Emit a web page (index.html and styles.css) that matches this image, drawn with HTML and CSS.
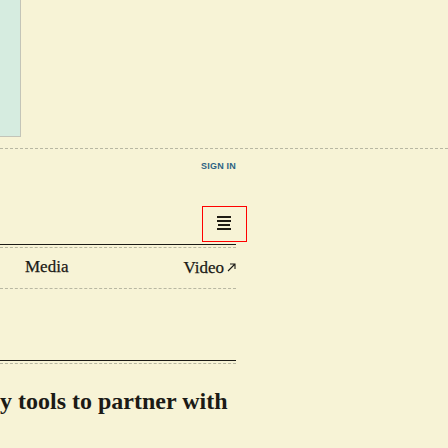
FILE: index.html
```html
<!DOCTYPE html>
<html lang="en">
<head>
<meta charset="utf-8">
<title>Menu</title>
<link rel="stylesheet" href="styles.css">
</head>
<body>
<header class="masthead">
  <div class="panel"></div>
</header>
<div class="rule-dashed"></div>
<nav class="nav">
  <div class="account"><a class="signin" href="#">SIGN IN</a></div>
  <div class="menu-row">
    <button class="menu-btn" aria-label="Menu">
      <svg width="14" height="14" viewBox="0 0 14 14" aria-hidden="true">
        <rect x="0" y="0" width="14" height="2" fill="#1f1c14"/>
        <rect x="0" y="4" width="14" height="2" fill="#1f1c14"/>
        <rect x="1" y="8" width="12" height="2" fill="#1f1c14"/>
        <rect x="0" y="12" width="14" height="2" fill="#1f1c14"/>
      </svg>
    </button>
  </div>
  <div class="double-rule"></div>
  <ul class="links">
    <li><a href="#">Media</a></li>
    <li><a href="#">Video<span class="ext"><svg width="9" height="9" viewBox="0 0 9 9" aria-hidden="true"><path d="M1 8 L8 1 M3 1 H8 V6" fill="none" stroke="#1b1a16" stroke-width="1.1"/></svg></span></a></li>
  </ul>
</nav>
<section class="story">
  <div class="double-rule"></div>
  <h2 class="headline">y tools to partner with</h2>
</section>
</body>
</html>
```

FILE: styles.css
```css
html, body {
  margin: 0;
  padding: 0;
}
body {
  background: #f7f3d6;
  overflow: hidden;
  width: 448px;
  height: 448px;
  font-family: "Liberation Serif", "Times New Roman", serif;
  color: #1b1a16;
}
.masthead {
  height: 137px;
}
.panel {
  width: 20px;
  height: 136px;
  background: #d6ece0;
  border-right: 1px solid #c3c4b8;
  border-bottom: 1px solid #c3c4b8;
}
.rule-dashed {
  margin-top: 11px;
  border-top: 1px dashed #b8b7a2;
}
.nav {
  width: 236px;
}
.account {
  display: flex;
  justify-content: flex-end;
  padding-top: 10px;
  height: 15px;
}
.signin {
  font-family: "Liberation Sans", Arial, sans-serif;
  font-weight: 700;
  font-size: 9px;
  line-height: 15px;
  letter-spacing: 0.2px;
  color: #2d6283;
  text-decoration: none;
}
.menu-row {
  display: flex;
  justify-content: flex-end;
  margin-top: 32px;
}
.menu-btn {
  width: 45px;
  height: 36px;
  margin-right: -11px;
  padding: 0;
  border: 1px solid #ff0000;
  background: transparent;
  display: flex;
  align-items: center;
  justify-content: center;
}
.menu-btn svg {
  display: block;
  margin-top: -2px;
  margin-left: -1px;
}
.double-rule {
  margin-top: 2px;
  border-top: 1px solid #1b1a16;
  height: 2px;
  border-bottom: 1px dashed #b8b7a2;
}
.links {
  list-style: none;
  margin: 0;
  padding: 9px 0 10px 25px;
  display: flex;
  justify-content: space-between;
  border-bottom: 1px dashed #b8b7a2;
}
.links a {
  font-size: 17px;
  line-height: 20px;
  color: #1b1a16;
  text-decoration: none;
  -webkit-text-stroke: 0.25px #1b1a16;
}
.ext {
  display: inline-block;
  margin-left: 3px;
  vertical-align: 1px;
  -webkit-text-stroke: 0;
}
.story {
  width: 236px;
  margin-top: 71px;
}
.story .double-rule {
  margin-top: 0;
}
.headline {
  margin: 22px 0 0 0;
  font-size: 24px;
  line-height: 30px;
  font-weight: 700;
  white-space: nowrap;
}
```
